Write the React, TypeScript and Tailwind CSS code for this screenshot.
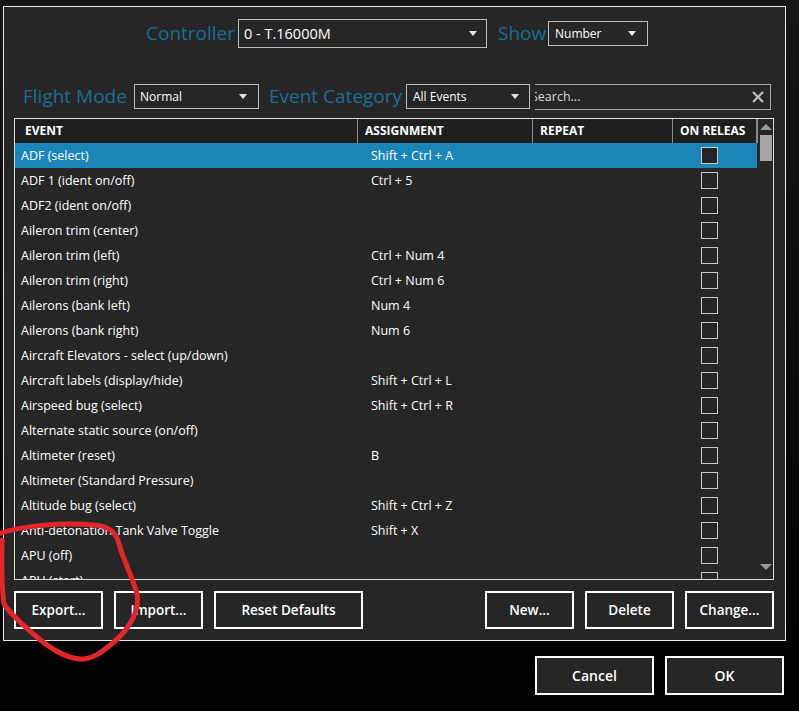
import React from "react";

const rows: [string, string][] = [
  ["ADF (select)", "Shift + Ctrl + A"],
  ["ADF 1 (ident on/off)", "Ctrl + 5"],
  ["ADF2 (ident on/off)", ""],
  ["Aileron trim (center)", ""],
  ["Aileron trim (left)", "Ctrl + Num 4"],
  ["Aileron trim (right)", "Ctrl + Num 6"],
  ["Ailerons (bank left)", "Num 4"],
  ["Ailerons (bank right)", "Num 6"],
  ["Aircraft Elevators - select (up/down)", ""],
  ["Aircraft labels (display/hide)", "Shift + Ctrl + L"],
  ["Airspeed bug (select)", "Shift + Ctrl + R"],
  ["Alternate static source (on/off)", ""],
  ["Altimeter (reset)", "B"],
  ["Altimeter (Standard Pressure)", ""],
  ["Altitude bug (select)", "Shift + Ctrl + Z"],
  ["Anti-detonation Tank Valve Toggle", "Shift + X"],
  ["APU (off)", ""],
  ["APU (start)", ""],
];

const font = { fontFamily: '"Open Sans", "Noto Sans", sans-serif' };

function Arrow() {
  return (
    <svg width="8" height="5" viewBox="0 0 8 5" className="shrink-0">
      <path d="M0 0 L8 0 L4 5 Z" fill="#e8e8e8" />
    </svg>
  );
}

function Btn({ label, w }: { label: string; w: string }) {
  return (
    <div
      className={`${w} h-[38px] border-2 border-white flex items-center justify-center text-[13.5px] font-semibold text-white bg-[#262626]`}
    >
      {label}
    </div>
  );
}

export default function App() {
  return (
    <div
      className="relative w-[799px] h-[711px] overflow-hidden bg-gradient-to-b from-[#161616] via-[#0b0b0b] to-[#020202]"
      style={font}
    >
      <div className="flex flex-col">
        {/* Main panel */}
        <div className="ml-[3px] mt-[6px] w-[783px] h-[635px] border border-[#e8e8e8] bg-[#262626] flex flex-col">
          {/* Row 1 */}
          <div className="flex items-center mt-[12px] ml-[142px] h-[29px]">
            <div className="w-[92px] text-[19px] text-[#1c6d94] leading-none">Controller</div>
            <div className="w-[249px] h-[29px] border border-[#bdbdbd] flex items-center justify-between pl-[5px] pr-[9px] text-[14.5px] text-white">
              <span>0 - T.16000M</span>
              <Arrow />
            </div>
            <div className="w-[61px] pl-[11px] text-[19px] text-[#1c6d94] leading-none">Show</div>
            <div className="w-[100px] h-[25px] border border-[#bdbdbd] flex items-center justify-between pl-[6px] pr-[11px] text-[12px] text-white">
              <span>Number</span>
              <Arrow />
            </div>
          </div>
          {/* Row 2 */}
          <div className="flex items-center mt-[35px] ml-[19px] h-[27px]">
            <div className="w-[111px] text-[19px] text-[#1c6d94] leading-none">Flight Mode</div>
            <div className="w-[125px] h-[25px] border border-[#bdbdbd] flex items-center justify-between pl-[5px] pr-[11px] text-[12px] text-white">
              <span>Normal</span>
              <Arrow />
            </div>
            <div className="w-[147px] pl-[10px] text-[19px] text-[#1c6d94] leading-none whitespace-nowrap">Event Category</div>
            <div className="w-[124px] h-[25px] border border-[#bdbdbd] flex items-center justify-between pl-[6px] pr-[10px] text-[12px] text-white">
              <span>All Events</span>
              <Arrow />
            </div>
            <div className="ml-[5px] w-[236px] h-[26px] border border-[#a8a8a8] border-l-0 flex items-center justify-between overflow-hidden pr-[5px] text-[12.5px] text-[#d8d8d8]">
              <span className="-ml-[4px] pt-[1px]">Search...</span>
              <svg width="14" height="14" viewBox="0 0 14 14">
                <path d="M2 2 L12 12 M12 2 L2 12" stroke="#b8b8b8" strokeWidth="2.4" />
              </svg>
            </div>
          </div>
          {/* Table */}
          <div className="ml-[10px] mt-[8px] w-[760px] h-[462px] border border-[#dcdcdc] flex overflow-hidden">
            <div className="w-[742px] flex flex-col">
              <div className="h-[24px] shrink-0 flex items-center bg-[#1f1f1f] text-[12px] font-bold text-white">
                <div className="w-[343px] h-full flex items-center pl-[10px] border-r border-[#8a8a8a]">EVENT</div>
                <div className="w-[175px] h-full flex items-center pl-[7px] border-r border-[#8a8a8a]">ASSIGNMENT</div>
                <div className="w-[140px] h-full flex items-center pl-[7px] border-r border-[#8a8a8a]">REPEAT</div>
                <div className="w-[84px] h-full flex items-center pl-[7px] border-r border-[#8a8a8a] whitespace-nowrap overflow-hidden">ON RELEAS</div>
              </div>
              {rows.map(([ev, as], i) => (
                <div
                  key={i}
                  className={`h-[25px] shrink-0 flex items-center text-[12.5px] text-white ${i === 0 ? "bg-[#1a86b8]" : ""}`}
                >
                  <div className="w-[356px] pl-[6px] pt-[1px] whitespace-nowrap">{ev}</div>
                  <div className="w-[330px] pt-[1px] whitespace-nowrap">{as}</div>
                  <div className={`w-[17px] h-[17px] border border-[#c8c8c8] ${i === 0 ? "bg-[#232323]" : ""}`} />
                </div>
              ))}
            </div>
            <div className="flex-1 flex flex-col items-center pt-[5px] border-l border-[#8a8a8a] h-[24px] overflow-visible">
              <svg width="12" height="6" viewBox="0 0 12 6" className="shrink-0">
                <path d="M0 6 L12 6 L6 0 Z" fill="#9a9a9a" />
              </svg>
              <div className="mt-[5px] w-[12px] h-[26px] shrink-0 bg-[#a6a6a6]" />
              <div className="mt-[403px] shrink-0">
                <svg width="12" height="6" viewBox="0 0 12 6">
                  <path d="M0 0 L12 0 L6 6 Z" fill="#9a9a9a" />
                </svg>
              </div>
            </div>
          </div>
          {/* Buttons */}
          <div className="ml-[10px] mt-[11px] w-[760px] flex">
            <div className="flex gap-[11px]">
              <Btn label="Export..." w="w-[89px]" />
              <Btn label="Import..." w="w-[89px]" />
              <Btn label="Reset Defaults" w="w-[149px]" />
            </div>
            <div className="ml-auto flex gap-[11px]">
              <Btn label="New..." w="w-[89px]" />
              <Btn label="Delete" w="w-[89px]" />
              <Btn label="Change..." w="w-[89px]" />
            </div>
          </div>
        </div>
        {/* Dialog buttons */}
        <div className="mt-[15px] flex justify-end gap-[11px] pr-[15px]">
          <div className="w-[119px] h-[39px] border-2 border-white bg-[#262626] flex items-center justify-center text-[14px] font-semibold text-white">
            Cancel
          </div>
          <div className="w-[119px] h-[39px] border-2 border-white bg-[#262626] flex items-center justify-center text-[14px] font-semibold text-white">
            OK
          </div>
        </div>
      </div>
      {/* red annotation */}
      <svg className="absolute inset-0 pointer-events-none" width="799" height="711" viewBox="0 0 799 711">
        <path
          d="M -2 534 C 20 526, 60 522, 95 525 C 108 526, 116 531, 119 544 C 124 562, 133 578, 137 594 C 140 612, 128 630, 114 642 C 102 652, 92 660, 80 659 C 64 658, 50 648, 38 638 C 24 626, 10 614, 4 604 C 1 585, 2 560, 2 540"
          fill="none"
          stroke="#e2262a"
          strokeWidth="5"
          strokeLinecap="round"
          strokeLinejoin="round"
        />
      </svg>
    </div>
  );
}
